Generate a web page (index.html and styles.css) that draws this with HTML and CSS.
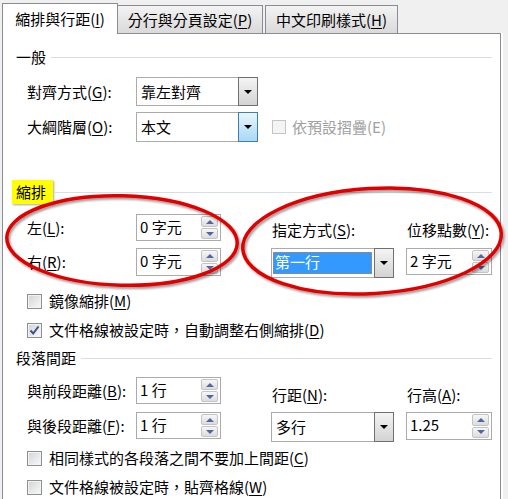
FILE: index.html
```html
<!DOCTYPE html>
<html lang="zh-Hant">
<head>
<meta charset="utf-8">
<title>段落</title>
<link rel="stylesheet" href="styles.css">
</head>
<body>
<div class="dialog">
  <div class="tabs">
    <div class="tab active">縮排與行距(<u>I</u>)</div>
    <div class="tab t2">分行與分頁設定(<u>P</u>)</div>
    <div class="tab t3">中文印刷樣式(<u>H</u>)</div>
  </div>
  <div class="panel">
    <div class="head h-general"><span>一般</span><span class="rule"></span></div>

    <div class="row row-align">
      <span class="label">對齊方式(<u>G</u>):</span>
      <div class="combo w-combo"><span class="val">靠左對齊</span><span class="drop"><i class="tri"></i></span></div>
    </div>
    <div class="row row-outline">
      <span class="label">大綱階層(<u>O</u>):</span>
      <div class="combo w-combo"><span class="val">本文</span><span class="drop hot"><i class="tri"></i></span></div>
      <div class="check disabled inline"><span class="box"></span><span>依預設摺疊(E)</span></div>
    </div>

    <div class="head h-indent"><span class="hl">縮排</span><span class="rule"></span></div>

    <div class="grid g-indent">
      <div class="cell-row r1"><span class="label">左(<u>L</u>):</span>
        <div class="spin"><span class="val">0 字元</span><span class="btns"><span class="sbtn"><i class="up"></i></span><span class="sbtn"><i class="down"></i></span></span></div>
      </div>
      <span class="rlabel r1 c2">指定方式(<u>S</u>):</span>
      <span class="rlabel r1 c3">位移點數(<u>Y</u>):</span>
      <div class="cell-row r2"><span class="label">右(<u>R</u>):</span>
        <div class="spin tall"><span class="val">0 字元</span><span class="btns"><span class="sbtn"><i class="up"></i></span><span class="sbtn"><i class="down"></i></span></span></div>
      </div>
      <div class="combo r2 c2 sel"><span class="val"><span class="selbox">第一行</span></span><span class="drop"><i class="tri"></i></span></div>
      <div class="spin r2 c3 wide"><span class="val">2 字元</span><span class="btns"><span class="sbtn"><i class="up"></i></span><span class="sbtn"><i class="down"></i></span></span></div>
    </div>

    <div class="check c-mirror"><span class="box"></span><span>鏡像縮排(<u>M</u>)</span></div>
    <div class="check c-grid"><span class="box"><svg width="13" height="13" viewBox="0 0 13 13"><path d="M2.5 6.5 L5.2 9.5 L10.5 2.5" fill="none" stroke="#3f5287" stroke-width="2"/></svg></span><span>文件格線被設定時，自動調整右側縮排(<u>D</u>)</span></div>

    <div class="head h-space"><span>段落間距</span><span class="rule"></span></div>

    <div class="grid g-space">
      <div class="cell-row r1"><span class="label">與前段距離(<u>B</u>):</span>
        <div class="spin"><span class="val">1 行</span><span class="btns"><span class="sbtn"><i class="up"></i></span><span class="sbtn"><i class="down"></i></span></span></div>
      </div>
      <span class="rlabel r1 c2">行距(<u>N</u>):</span>
      <span class="rlabel r1 c3">行高(<u>A</u>):</span>
      <div class="cell-row r2"><span class="label">與後段距離(<u>F</u>):</span>
        <div class="spin"><span class="val">1 行</span><span class="btns"><span class="sbtn"><i class="up"></i></span><span class="sbtn"><i class="down"></i></span></span></div>
      </div>
      <div class="combo r2 c2"><span class="val">多行</span><span class="drop"><i class="tri"></i></span></div>
      <div class="spin r2 c3 wide tall"><span class="val">1.25</span><span class="btns"><span class="sbtn"><i class="up"></i></span><span class="sbtn"><i class="down"></i></span></span></div>
    </div>

    <div class="check c-same"><span class="box"></span><span>相同樣式的各段落之間不要加上間距(<u>C</u>)</span></div>
    <div class="check c-snap"><span class="box"></span><span>文件格線被設定時，貼齊格線(<u>W</u>)</span></div>
  </div>
</div>

<svg class="marks" width="508" height="499" viewBox="0 0 508 499">
  <defs>
    <filter id="shadow" x="-10%" y="-20%" width="120%" height="140%">
      <feDropShadow dx="1.5" dy="2" stdDeviation="1.2" flood-color="#000" flood-opacity="0.4"/>
    </filter>
  </defs>
  <g fill="none" stroke="#e00000" stroke-width="3.5" filter="url(#shadow)">
    <ellipse cx="122" cy="240.5" rx="115.25" ry="44.75" transform="rotate(1.5 122 240.5)"/>
    <ellipse cx="372" cy="241" rx="129.5" ry="52.5" transform="rotate(-3.5 372 241)"/>
  </g>
</svg>
</body>
</html>
```
FILE: styles.css
```css
* { box-sizing: border-box; }
html, body { margin: 0; padding: 0; }
body {
  background: #f0f0f0;
  font-family: "Noto Sans CJK TC", "Noto Sans", sans-serif;
  font-size: 15px;
  color: #000;
  width: 508px;
  height: 499px;
  overflow: hidden;
  position: relative;
}
u { text-decoration: underline; text-underline-offset: 2px; }

.dialog { padding-left: 2px; }

/* tabs */
.tabs { display: flex; align-items: flex-end; height: 33px; }
.tab {
  height: 28px;
  padding-top: 3px;
  line-height: 22px;
  text-align: center;
  white-space: nowrap;
  border: 1px solid #898c95;
  border-bottom: none;
  background: linear-gradient(#f3f3f3, #dadada);
}
.tab.active {
  width: 116px;
  height: 31px;
  padding-top: 4px;
  background: #fff;
  position: relative;
  z-index: 1;
  margin-bottom: -1px;
}
.tab.t2 { width: 146px; margin-left: -1px; }
.tab.t3 { width: 133px; margin-left: 2px; }

/* panel */
.panel {
  width: 499px;
  height: 470px;
  border: 1px solid #898c95;
  border-bottom: none;
  background: #fff;
  box-shadow: 2px 0 0 #fff;
  padding: 0 8px 0 13px;
}

.head { display: flex; align-items: center; height: 20px; line-height: 20px; white-space: nowrap; }
.head .rule { flex: 1; height: 1px; background: #d5dfe5; margin-left: 5px; }
.h-general { margin-top: 13px; }
.h-indent { margin-top: 38px; height: 24px; margin-left: -4px; }
.h-indent .rule { margin-left: 2px; }
.hl {
  background: #ffff00;
  padding: 0 7px 0 4px;
  line-height: 24px;
  box-shadow: 1px 1px 2px rgba(0, 0, 0, 0.35);
}
.h-space { margin-top: 8px; }

.row { display: flex; align-items: center; margin-left: 11px; }
.row-align { margin-top: 10px; height: 29px; }
.row-outline { margin-top: 6px; height: 30px; }
.label { width: 109px; line-height: 20px; white-space: nowrap; flex: none; }

/* combo */
.combo {
  display: flex;
  height: 29px;
  border: 1px solid #ababab;
  background: #fff;
}
.row-outline .combo { height: 30px; }
.w-combo { width: 122px; }
.combo .val { flex: 1; padding-left: 4px; line-height: 27px; white-space: nowrap; }
.drop {
  width: 20px;
  margin: -1px -1px -1px 0;
  border: 1px solid #707070;
  background: linear-gradient(#f4f4f4, #d3d3d3);
  display: flex;
  align-items: center;
  justify-content: center;
}
.drop.hot {
  border-color: #3c7fb1;
  background: linear-gradient(#eaf6fd, #a7d9f5);
}
.tri {
  width: 0; height: 0;
  border-left: 4px solid transparent;
  border-right: 4px solid transparent;
  border-top: 4px solid #000;
}
.combo.sel .val { padding: 3px 2px 3px 1px; line-height: 20px; }
.selbox {
  display: block;
  height: 22px;
  background: #3399ff;
  color: #fff;
  padding-left: 2px;
  line-height: 20px;
  outline: 1px dotted #c9824a;
  outline-offset: -1px;
}

/* spin */
.spin {
  display: flex;
  width: 85px;
  height: 27px;
  border: 1px solid #ababab;
  background: #fff;
  align-self: start;
}
.spin.tall { height: 28px; }
.spin.wide { width: 86px; }
.spin .val { flex: 1; padding-left: 3px; line-height: 24px; white-space: nowrap; }
.btns { display: flex; flex-direction: column; gap: 1px; width: 19px; padding: 1px 2px 1px 0; }
.sbtn {
  flex: 1;
  border: 1px solid #c4c4c4;
  border-radius: 2px;
  background: linear-gradient(#f7f7f7, #dcdcdc);
  display: flex;
  align-items: center;
  justify-content: center;
}
.up, .down { width: 0; height: 0; border-left: 4px solid transparent; border-right: 4px solid transparent; }
.up { border-bottom: 4px solid #51679f; }
.down { border-top: 4px solid #51679f; }

/* grids */
.grid {
  display: grid;
  grid-template-columns: 232px 123px 86px;
  column-gap: 12px;
  row-gap: 7px;
  margin-left: 11px;
}
.g-indent { margin-top: 10px; grid-template-rows: 27px 30px; }
.g-space { margin-top: 9px; grid-template-rows: 28px 30px; }
.cell-row { display: flex; align-items: center; grid-column: 1; }
.cell-row.r1 { grid-row: 1; }
.cell-row.r2 { grid-row: 2; align-items: flex-start; }
.cell-row.r2 .label { margin-top: 4px; }
.r1 { grid-row: 1; }
.r2 { grid-row: 2; }
.c2 { grid-column: 2; }
.c3 { grid-column: 3; }
.rlabel { align-self: end; line-height: 20px; white-space: nowrap; margin-bottom: 1px; padding-left: 1px; }
.g-space .rlabel { margin-bottom: 0; }
.grid .combo { height: 30px; }

/* checkboxes */
.check { display: flex; align-items: center; height: 20px; gap: 7px; margin-left: 11px; white-space: nowrap; line-height: 20px; }
.check .box {
  width: 15px; height: 15px;
  flex: none;
  border: 1px solid #8e8f8f;
  background: linear-gradient(135deg, #d2d4d8, #f9f9f9);
  box-shadow: inset 0 0 0 1px #f3f3f3;
  display: flex; align-items: center; justify-content: center;
}
.check.disabled { color: #a0a0a0; }
.check.disabled .box { border-color: #c5c5c5; background: #f4f4f4; box-shadow: none; width: 14px; height: 14px; }
.check.inline { margin-left: 14px; gap: 6px; }
.c-mirror { margin-top: 13px; }
.c-grid { margin-top: 9px; }
.c-same { margin-top: 6px; }
.c-snap { margin-top: 9px; }

.marks { position: absolute; left: 0; top: 0; pointer-events: none; z-index: 2; }
```
